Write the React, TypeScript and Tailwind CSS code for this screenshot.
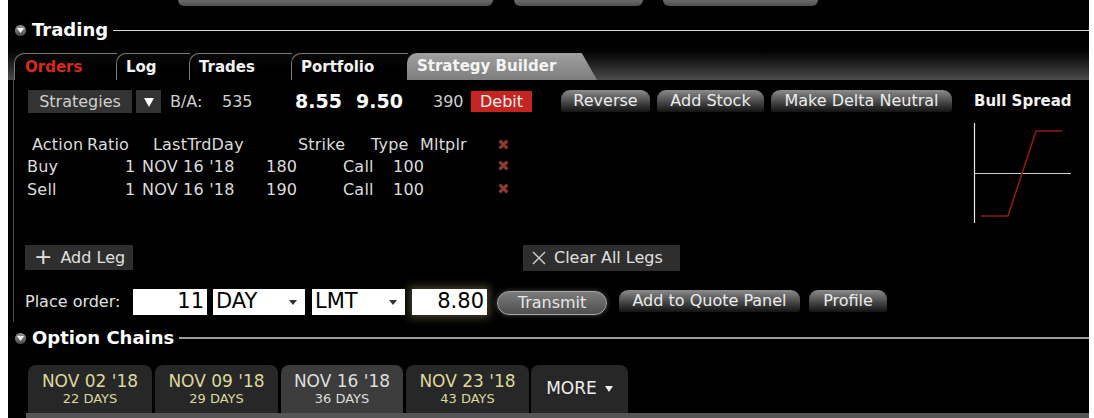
import React from "react";

const font = "font-['DejaVu_Sans',sans-serif]";

const SectionIcon = () => (
  <div className="w-[11px] h-[11px] rounded-full bg-gradient-to-b from-[#9a9a9a] to-[#4a4a4a] flex items-center justify-center">
    <svg width="7" height="5" viewBox="0 0 7 5">
      <path d="M0 0 L7 0 L3.5 5 Z" fill="#fff" />
    </svg>
  </div>
);

const SectionHeader = ({ title, line }: { title: string; line: string }) => (
  <div className="flex items-center h-[20px] pl-[7px]">
    <SectionIcon />
    <span className="ml-[6px] text-[18px] font-bold text-white leading-none">{title}</span>
    <div className={`flex-1 ml-[5px] ${line}`} />
  </div>
);

const PillButton = ({ label, w }: { label: string; w: string }) => (
  <button
    className={`${w} h-[22px] rounded-t-[9px] rounded-b-[3px] bg-gradient-to-b from-[#8c8c8c] via-[#4e4e4e] to-[#141414] text-[#ececec] text-[16px] leading-none flex items-center justify-center`}
  >
    {label}
  </button>
);

const RemoveX = () => <span className="text-[#8a3a33] text-[15px] font-bold leading-none">✖</span>;

const legs = [
  { action: "Buy", strike: "180" },
  { action: "Sell", strike: "190" },
];

const chains = [
  { date: "NOV 02 '18", days: "22 DAYS", w: "w-[124px]" },
  { date: "NOV 09 '18", days: "29 DAYS", w: "w-[123px]" },
  { date: "NOV 16 '18", days: "36 DAYS", w: "w-[122px]", active: true },
  { date: "NOV 23 '18", days: "43 DAYS", w: "w-[123px]" },
];

export default function App() {
  return (
    <div className={`bg-white pl-[8px] pr-[5px] ${font}`}>
      <div className="bg-black h-[418px] overflow-hidden flex flex-col">
        {/* bits of the toolbar above */}
        <div className="h-[7px] flex">
          <div className="ml-[170px] w-[315px] h-[6px] rounded-b-[8px] bg-gradient-to-b from-[#6a6a6a] to-[#4e4e4e]" />
          <div className="ml-[21px] w-[129px] h-[6px] rounded-b-[8px] bg-gradient-to-b from-[#6a6a6a] to-[#4e4e4e]" />
          <div className="ml-[20px] w-[155px] h-[6px] rounded-b-[8px] bg-gradient-to-b from-[#6a6a6a] to-[#4e4e4e]" />
        </div>

        <div className="mt-[13px]">
          <SectionHeader title="Trading" line="h-px bg-[#d6d6d6]" />
        </div>

        {/* tab strip */}
        <div className="mt-[2px] h-[38px] flex items-end pl-[6px] bg-gradient-to-b from-black via-[#1a1a1a] to-[#4d4d4d]">
          <div className="w-[103px] h-[27px] rounded-tl-[10px] border-l border-t border-[#777] bg-gradient-to-b from-[#0a0a0a] to-black pl-[10px] flex items-center text-[15px] font-bold text-[#d8291c]">
            Orders
          </div>
          <div className="w-[74px] h-[27px] -ml-[1px] rounded-tl-[10px] border-l border-t border-[#777] bg-gradient-to-b from-[#0a0a0a] to-black pl-[9px] flex items-center text-[15px] font-bold text-[#f2f2f2]">
            Log
          </div>
          <div className="w-[103px] h-[27px] -ml-[1px] rounded-tl-[10px] border-l border-t border-[#777] bg-gradient-to-b from-[#0a0a0a] to-black pl-[9px] flex items-center text-[15px] font-bold text-[#f2f2f2]">
            Trades
          </div>
          <div className="w-[117px] h-[27px] -ml-[1px] rounded-tl-[10px] border-l border-t border-[#777] bg-gradient-to-b from-[#0a0a0a] to-black pl-[9px] flex items-center text-[15px] font-bold text-[#f2f2f2]">
            Portfolio
          </div>
          <div className="w-[190px] h-[27px] -ml-[1px] rounded-tl-[10px] bg-gradient-to-b from-[#a0a0a0] to-[#7e7e7e] [clip-path:polygon(0_0,92%_0,100%_100%,0_100%)] pl-[10px] flex items-center text-[15px] font-bold text-[#f4f4f4]">
            Strategy Builder
          </div>
        </div>

        {/* strategy builder body */}
        <div className="ml-[5px] border-l border-[#4c4c4c] flex pb-[6px]">
          <div className="w-[946px] flex flex-col">
            <div className="mt-[10px] h-[23px] flex items-center text-[16px] text-[#cfcfcf]">
              <div className="ml-[14px] w-[104px] h-[23px] bg-[#333] flex items-center justify-center">Strategies</div>
              <div className="ml-[4px] w-[25px] h-[23px] bg-[#333] flex items-center justify-center">
                <svg width="10" height="10" viewBox="0 0 10 10">
                  <path d="M0 1 L10 1 L5 10 Z" fill="#fff" />
                </svg>
              </div>
              <span className="ml-[9px] w-[52px]">B/A:</span>
              <span className="w-[73px]">535</span>
              <span className="w-[61px] text-[19px] font-bold text-white">8.55</span>
              <span className="w-[77px] text-[19px] font-bold text-white">9.50</span>
              <span className="w-[38px]">390</span>
              <span className="w-[61px] h-[21px] bg-[#c62420] text-[#f0f0f0] flex items-center justify-center">Debit</span>
              <div className="ml-[29px] flex gap-[7px] -mt-[2px]">
                <PillButton label="Reverse" w="w-[89px]" />
                <PillButton label="Add Stock" w="w-[107px]" />
                <PillButton label="Make Delta Neutral" w="w-[181px]" />
              </div>
            </div>

            {/* legs table */}
            <div className="mt-[22px] text-[16px] tracking-[0.2px] text-[#dcdcdc]">
              <div className="h-[20px] flex items-center pl-[18px]">
                <span className="w-[55px]">Action</span>
                <span className="w-[66px]">Ratio</span>
                <span className="w-[145px]">LastTrdDay</span>
                <span className="w-[73px]">Strike</span>
                <span className="w-[49px]">Type</span>
                <span className="w-[77px]">Mltplr</span>
                <RemoveX />
              </div>
              {legs.map((leg) => (
                <div key={leg.action} className="h-[23px] flex items-center pl-[13px]">
                  <span className="w-[98px]">{leg.action}</span>
                  <span className="w-[17px]">1</span>
                  <span className="w-[124px]">NOV 16 '18</span>
                  <span className="w-[77px]">{leg.strike}</span>
                  <span className="w-[50px]">Call</span>
                  <span className="w-[104px]">100</span>
                  <RemoveX />
                </div>
              ))}
            </div>

            <div className="mt-[44px] h-[25px] flex items-center text-[16px] text-[#e0e0e0]">
              <div className="ml-[11px] w-[108px] h-[25px] bg-[#2e2e2e] flex items-center pl-[9px] gap-[8px]">
                <span className="text-[22px] leading-none -mt-[2px]">+</span>
                <span>Add Leg</span>
              </div>
              <div className="ml-[390px] w-[157px] h-[26px] bg-[#2e2e2e] flex items-center pl-[9px] gap-[8px]">
                <svg width="14" height="14" viewBox="0 0 14 14">
                  <path d="M1 1 L13 13 M13 1 L1 13" stroke="#d0d0d0" strokeWidth="1.4" />
                </svg>
                <span>Clear All Legs</span>
              </div>
            </div>

            <div className="mt-[18px] h-[28px] flex items-center text-[16px] text-[#e0e0e0]">
              <span className="ml-[11px] w-[108px]">Place order:</span>
              <div className="w-[74px] h-[26px] bg-white text-black text-[21px] flex items-center justify-end pr-[3px]">11</div>
              <div className="ml-[6px] w-[92px] h-[26px] bg-white text-black text-[21px] flex items-center justify-between pl-[3px] pr-[8px]">
                <span>DAY</span>
                <svg width="8" height="5" viewBox="0 0 8 5"><path d="M0 0 L8 0 L4 5 Z" fill="#333" /></svg>
              </div>
              <div className="ml-[7px] w-[93px] h-[26px] bg-white text-black text-[21px] flex items-center justify-between pl-[3px] pr-[8px]">
                <span>LMT</span>
                <svg width="8" height="5" viewBox="0 0 8 5"><path d="M0 0 L8 0 L4 5 Z" fill="#333" /></svg>
              </div>
              <div className="ml-[7px] w-[75px] h-[26px] bg-white text-black text-[21px] flex items-center justify-end pr-[3px] shadow-[0_0_8px_3px_rgba(190,180,110,0.35)]">
                8.80
              </div>
              <div className="ml-[10px] w-[110px] h-[24px] mt-[2px] rounded-full border border-[#a8a8a8] bg-gradient-to-b from-[#7c7c7c] to-[#4f4f4f] shadow-[0_0_5px_rgba(255,255,255,0.3)] flex items-center justify-center text-[#e6e6e6]">
                Transmit
              </div>
              <div className="ml-[12px] flex gap-[9px] -mt-[3px]">
                <PillButton label="Add to Quote Panel" w="w-[181px]" />
                <PillButton label="Profile" w="w-[78px]" />
              </div>
            </div>
          </div>

          {/* strategy picture */}
          <div className="flex-1 flex flex-col">
            <div className="mt-[10px] h-[23px] flex items-center pl-[14px] text-[15px] font-bold text-[#f2f2f2]">
              Bull Spread
            </div>
            <svg className="mt-[7px] ml-[9px]" width="110" height="108" viewBox="0 0 110 108">
              <path d="M5.5 3 L5.5 103" stroke="#e6e6e6" strokeWidth="1.2" />
              <path d="M5 53.5 L102 53.5" stroke="#cfcfcf" strokeWidth="1.2" />
              <path d="M12 96 L39 96 L67 11 L93 11" stroke="#8e1a16" strokeWidth="1.6" fill="none" />
            </svg>
          </div>
        </div>

        <div className="mt-[6px]">
          <SectionHeader title="Option Chains" line="h-[2px] bg-[#9c9c9c]" />
        </div>

        <div className="mt-[17px] h-[48px] flex items-end pl-[20px] gap-[3px]">
          {chains.map((c) => (
            <div
              key={c.date}
              className={`${c.w} h-[48px] rounded-t-[8px] flex flex-col items-center justify-center ${
                c.active ? "bg-[#3c3c3c] text-[#dedede]" : "bg-[#272727] text-[#dcd89a]"
              }`}
            >
              <span className="text-[17px] leading-[19px]">{c.date}</span>
              <span className="text-[13px] leading-[16px]">{c.days}</span>
            </div>
          ))}
          <div className="w-[97px] h-[48px] -ml-[1px] rounded-t-[8px] bg-[#272727] flex items-center justify-center gap-[8px] text-[17px] text-[#eeeeee]">
            <span>MORE</span>
            <svg width="8" height="6" viewBox="0 0 8 6"><path d="M0 0 L8 0 L4 6 Z" fill="#eee" /></svg>
          </div>
        </div>
        <div className="ml-[18px] h-[5px] bg-[#555]" />
      </div>
    </div>
  );
}
